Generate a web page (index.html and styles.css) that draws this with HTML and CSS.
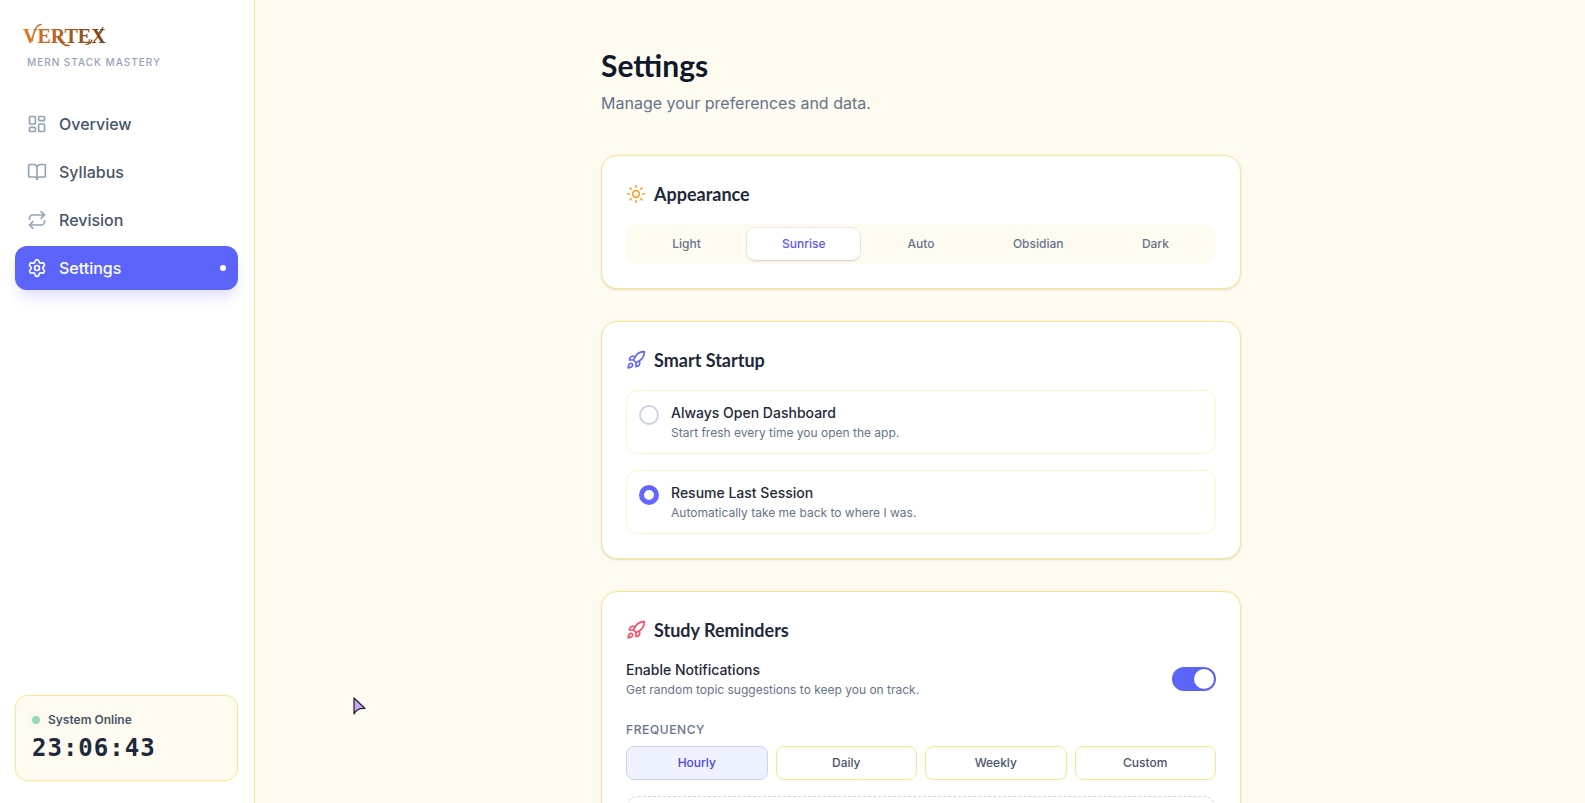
FILE: index.html
```html
<!DOCTYPE html>
<html lang="en">
<head>
<meta charset="utf-8">
<meta name="viewport" content="width=device-width, initial-scale=1">
<title>Vertex – Settings</title>
<link rel="stylesheet" href="styles.css">
</head>
<body>
<svg class="defs" aria-hidden="true">
  <symbol id="rocket" viewBox="0 0 24 24">
    <path d="M4.5 16.5c-1.5 1.26-2 5-2 5s3.74-.5 5-2c.71-.84.7-2.13-.09-2.91a2.18 2.18 0 0 0-2.91-.09z"/>
    <path d="m12 15-3-3a22 22 0 0 1 2-3.95A12.88 12.88 0 0 1 22 2c0 2.72-.78 7.5-6 11a22.35 22.35 0 0 1-4 2z"/>
    <path d="M9 12H4s.55-3.03 2-4c1.62-1.08 5 0 5 0"/>
    <path d="M12 15v5s3.03-.55 4-2c1.08-1.62 0-5 0-5"/>
  </symbol>
</svg>
<div class="app">
  <aside class="sidebar">
    <div class="brand">
      <svg class="logo" viewBox="0 0 96 28" role="img" aria-label="Vertex">
        <defs>
          <linearGradient id="copper" gradientUnits="userSpaceOnUse" x1="0" y1="0" x2="82" y2="0">
            <stop offset="0" stop-color="#e87722"/>
            <stop offset="1" stop-color="#7a4010"/>
          </linearGradient>
        </defs>
        <text class="logo-text" x="0" y="21" fill="url(#copper)">VERTEX</text>
        <path d="M9 19C11 9 13 3 18 2.500" fill="none" stroke="url(#copper)" stroke-width="1.300" stroke-linecap="round"/>
        <path d="M35 16c3 5 6 8 11 7.500" fill="none" stroke="url(#copper)" stroke-width="1.600" stroke-linecap="round"/>
        <path d="M69 18c-1 3-3 4.500-6 4.500M75 12l5-6.500" fill="none" stroke="url(#copper)" stroke-width="1.200" stroke-linecap="round"/>
      </svg>
      <p class="tagline">MERN STACK MASTERY</p>
    </div>
    <nav class="nav">
      <a class="nav-item" href="#overview">
        <svg class="icon" viewBox="0 0 24 24"><rect x="3" y="3" width="7" height="9" rx="1"/><rect x="14" y="3" width="7" height="5" rx="1"/><rect x="14" y="12" width="7" height="9" rx="1"/><rect x="3" y="16" width="7" height="5" rx="1"/></svg>
        Overview
      </a>
      <a class="nav-item" href="#syllabus">
        <svg class="icon" viewBox="0 0 24 24"><path d="M12 7v14"/><path d="M3 18a1 1 0 0 1-1-1V4a1 1 0 0 1 1-1h5a4 4 0 0 1 4 4 4 4 0 0 1 4-4h5a1 1 0 0 1 1 1v13a1 1 0 0 1-1 1h-6a3 3 0 0 0-3 3 3 3 0 0 0-3-3z"/></svg>
        Syllabus
      </a>
      <a class="nav-item" href="#revision">
        <svg class="icon" viewBox="0 0 24 24"><path d="m17 2 4 4-4 4"/><path d="M3 11v-1a4 4 0 0 1 4-4h14"/><path d="m7 22-4-4 4-4"/><path d="M21 13v1a4 4 0 0 1-4 4H3"/></svg>
        Revision
      </a>
      <a class="nav-item active" href="#settings" aria-current="page">
        <svg class="icon" viewBox="0 0 24 24"><path d="M9.671 4.136a2.340 2.340 0 0 1 4.659 0 2.340 2.340 0 0 0 3.319 1.915 2.340 2.340 0 0 1 2.330 4.033 2.340 2.340 0 0 0 0 3.831 2.340 2.340 0 0 1-2.330 4.033 2.340 2.340 0 0 0-3.319 1.915 2.340 2.340 0 0 1-4.659 0 2.340 2.340 0 0 0-3.320-1.915 2.340 2.340 0 0 1-2.330-4.033 2.340 2.340 0 0 0 0-3.831A2.340 2.340 0 0 1 6.350 6.051a2.340 2.340 0 0 0 3.319-1.915"/><circle cx="12" cy="12" r="3"/></svg>
        Settings
        <span class="nav-dot"></span>
      </a>
    </nav>
    <div class="status">
      <p class="status-label"><span class="status-dot"></span>System Online</p>
      <time class="clock">23:06:43</time>
    </div>
  </aside>

  <main class="main">
    <div class="content">
      <header class="page-header">
        <h1 class="page-title">Settings</h1>
        <p class="page-subtitle">Manage your preferences and data.</p>
      </header>

      <section class="card">
        <h2 class="card-title">
          <svg class="icon sun" viewBox="0 0 24 24"><circle cx="12" cy="12" r="4"/><path d="M12 2v2M12 20v2M4.930 4.930l1.410 1.410M17.660 17.660l1.410 1.410M2 12h2M20 12h2M6.340 17.660l-1.410 1.410M19.070 4.930l-1.410 1.410"/></svg>
          Appearance
        </h2>
        <div class="tabs">
          <button class="tab" type="button">Light</button>
          <button class="tab selected" type="button" aria-pressed="true">Sunrise</button>
          <button class="tab" type="button">Auto</button>
          <button class="tab" type="button">Obsidian</button>
          <button class="tab" type="button">Dark</button>
        </div>
      </section>

      <section class="card">
        <h2 class="card-title">
          <svg class="icon indigo"><use href="#rocket"/></svg>
          Smart Startup
        </h2>
        <div class="options">
          <label class="option">
            <input class="radio" type="radio" name="startup">
            <span class="copy"><span class="label">Always Open Dashboard</span><span class="hint">Start fresh every time you open the app.</span></span>
          </label>
          <label class="option">
            <input class="radio" type="radio" name="startup" checked>
            <span class="copy"><span class="label">Resume Last Session</span><span class="hint">Automatically take me back to where I was.</span></span>
          </label>
        </div>
      </section>

      <section class="card">
        <h2 class="card-title">
          <svg class="icon rose"><use href="#rocket"/></svg>
          Study Reminders
        </h2>
        <div class="reminders">
          <label class="toggle-row">
            <span class="copy"><span class="label">Enable Notifications</span><span class="hint">Get random topic suggestions to keep you on track.</span></span>
            <input class="switch" type="checkbox" role="switch" checked>
          </label>
          <div class="frequency">
            <h3 class="caption">FREQUENCY</h3>
            <div class="choices">
              <button class="choice selected" type="button" aria-pressed="true">Hourly</button>
              <button class="choice" type="button">Daily</button>
              <button class="choice" type="button">Weekly</button>
              <button class="choice" type="button">Custom</button>
            </div>
            <div class="preview"></div>
          </div>
        </div>
      </section>
    </div>
  </main>
</div>
<svg class="pointer" viewBox="0 0 14 19" aria-hidden="true"><path d="M1 1v16c2-4 5-6 11-5.500z" fill="#cba6f7" stroke="#1e1e2e" stroke-width="1.200" stroke-linejoin="round"/></svg>
</body>
</html>
```
FILE: styles.css
```css
* {
  box-sizing: border-box;
}

body,
h1,
h2,
h3,
p {
  margin: 0;
}

body {
  background: #fffbf0;
  color: #1e293b;
  font-family: Inter, "Liberation Sans", sans-serif;
  font-size: 16px;
  line-height: 24px;
}

button {
  font: inherit;
  cursor: pointer;
}

.defs {
  display: none;
}

.app {
  display: flex;
  height: 100vh;
}

.icon {
  width: 20px;
  height: 20px;
  flex: none;
  fill: none;
  stroke: currentColor;
  stroke-width: 2;
  stroke-linecap: round;
  stroke-linejoin: round;
}

/* Sidebar */

.sidebar {
  display: flex;
  flex-direction: column;
  flex: none;
  width: 255px;
  padding: 22px 16px 22px 15px;
  background: #fff;
  border-right: 1px solid #fde68a;
}

.brand {
  padding: 0 8px 32px;
}

.logo {
  display: block;
  width: 96px;
  height: 28px;
}

.logo-text {
  font-family: "Liberation Serif", serif;
  font-size: 20px;
  font-weight: 700;
}

.tagline {
  margin-top: 4px;
  padding-left: 4px;
  color: #94a3b8;
  font-size: 10px;
  font-weight: 500;
  line-height: 16px;
  letter-spacing: 1px;
}

.nav {
  display: flex;
  flex-direction: column;
  gap: 4px;
}

.nav-item {
  display: flex;
  align-items: center;
  gap: 12px;
  padding: 10px 12px;
  border-radius: 12px;
  color: #475569;
  font-weight: 500;
  text-decoration: none;
}

.nav-item .icon {
  color: #94a3b8;
}

.nav-item.active {
  background: #5b63f8;
  color: #fff;
  box-shadow: 0 10px 15px -3px #e0e0ff, 0 4px 6px -4px #e0e0ff;
}

.nav-item.active .icon {
  color: #fff;
}

.nav-dot {
  width: 6px;
  height: 6px;
  margin-left: auto;
  border-radius: 50%;
  background: #fff;
}

.status {
  margin-top: auto;
  padding: 16px;
  border: 1px solid #fde68a;
  border-radius: 12px;
  background: #fffbf0;
}

.status-label {
  display: flex;
  align-items: center;
  gap: 8px;
  margin-bottom: 4px;
  color: #475569;
  font-size: 12px;
  font-weight: 600;
  line-height: 16px;
}

.status-dot {
  width: 8px;
  height: 8px;
  border-radius: 50%;
  background: #95dab4;
  box-shadow: 0 0 8px #95dab440;
}

.clock {
  display: block;
  font-family: "DejaVu Sans Mono", monospace;
  font-size: 24px;
  font-weight: 700;
  line-height: 32px;
  letter-spacing: 1px;
}

/* Page */

.main {
  flex: 1;
  min-width: 0;
  padding: 47px 32px 48px 34px;
  overflow-y: auto;
  scrollbar-width: none;
}

.content {
  display: flex;
  flex-direction: column;
  gap: 32px;
  max-width: 640px;
  margin: 0 auto;
}

.page-header {
  padding-bottom: 8px;
}

.page-title {
  color: #0f172a;
  font-family: Lato, Inter, sans-serif;
  font-size: 30px;
  font-weight: 700;
  line-height: 36px;
}

.page-subtitle {
  margin-top: 8px;
  color: #64748b;
}

.card {
  padding: 24px;
  border: 1px solid #fde68a;
  border-radius: 16px;
  background: #fff;
  box-shadow: 0 1px 3px rgb(0 0 0 / 10%), 0 1px 2px -1px rgb(0 0 0 / 10%);
}

.card-title {
  display: flex;
  align-items: center;
  gap: 8px;
  margin-bottom: 16px;
  font-family: Lato, Inter, sans-serif;
  font-size: 18px;
  font-weight: 700;
  line-height: 28px;
}

.sun {
  color: #ff9f2e;
}

.indigo {
  color: #6366ff;
}

.rose {
  color: #ff4d67;
}

.tabs {
  display: grid;
  grid-template-columns: repeat(5, 1fr);
  gap: 4px;
  padding: 4px;
  border-radius: 12px;
  background: #fffbf0;
}

.tab {
  padding: 8px;
  border: 0;
  border-radius: 8px;
  background: none;
  color: #64748b;
  font-size: 12px;
  font-weight: 500;
  line-height: 16px;
}

.tab.selected {
  background: #fff;
  color: #6057f5;
  box-shadow: 0 0 0 1px rgb(0 0 0 / 5%), 0 1px 3px rgb(0 0 0 / 10%), 0 1px 2px -1px rgb(0 0 0 / 10%);
}

.options {
  display: flex;
  flex-direction: column;
  gap: 16px;
}

.option {
  display: flex;
  gap: 12px;
  padding: 12px;
  border: 1px solid #fef3c7;
  border-radius: 12px;
}

.radio {
  appearance: none;
  flex: none;
  width: 20px;
  height: 20px;
  margin: 2px 0 0;
  border: 2px solid #cbd5e1;
  border-radius: 50%;
}

.radio:checked {
  border: 5px solid #6366ff;
}

.copy {
  display: flex;
  flex-direction: column;
  gap: 2px;
}

.label {
  font-size: 14px;
  font-weight: 500;
  line-height: 20px;
}

.hint {
  color: #64748b;
  font-size: 12px;
  line-height: 16px;
}

.reminders {
  display: flex;
  flex-direction: column;
  gap: 24px;
}

.toggle-row {
  display: flex;
  align-items: center;
  justify-content: space-between;
}

.switch {
  appearance: none;
  display: flex;
  flex: none;
  width: 44px;
  height: 24px;
  margin: 0;
  padding: 2px;
  border-radius: 12px;
  background: #cbd5e1;
}

.switch::before {
  content: "";
  width: 20px;
  height: 20px;
  border-radius: 50%;
  background: #fff;
}

.switch:checked {
  justify-content: flex-end;
  background: #5b63f8;
}

.caption {
  margin-bottom: 8px;
  color: #64748b;
  font-size: 12px;
  font-weight: 500;
  line-height: 16px;
  letter-spacing: 0.05em;
}

.choices {
  display: grid;
  grid-template-columns: repeat(4, 1fr);
  gap: 8px;
}

.choice {
  padding: 8px;
  border: 1px solid #fde68a;
  border-radius: 8px;
  background: #fff;
  color: #475569;
  font-size: 12px;
  font-weight: 500;
  line-height: 16px;
}

.choice.selected {
  border-color: #c7d2fe;
  background: #eef2ff;
  color: #5145dc;
}

.preview {
  height: 64px;
  margin-top: 16px;
  border: 1px dashed #c7d2fe;
  border-radius: 12px;
}

.pointer {
  position: absolute;
  top: 697px;
  left: 353px;
  width: 14px;
  height: 19px;
}
```
